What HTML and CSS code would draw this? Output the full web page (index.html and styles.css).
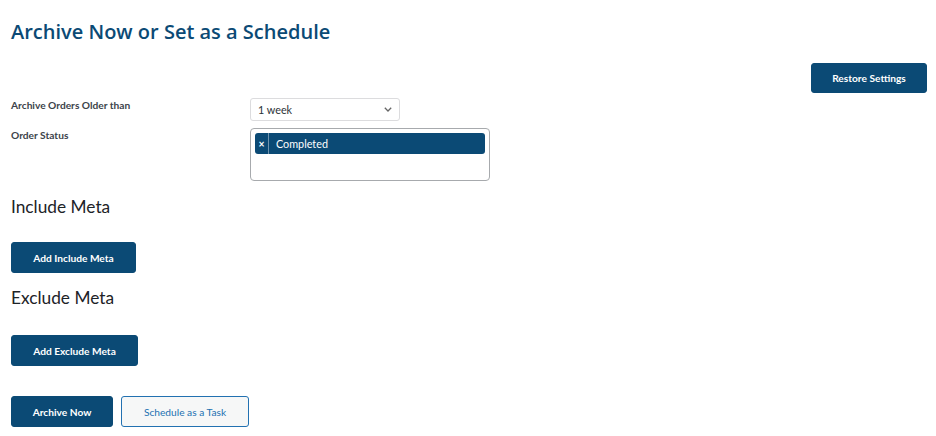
FILE: index.html
```html
<!DOCTYPE html>
<html lang="en">
<head>
<meta charset="utf-8">
<title>Archive Now or Set as a Schedule</title>
<link rel="stylesheet" href="styles.css">
</head>
<body>
<div class="page">
  <h2 class="title">Archive Now or Set as a Schedule</h2>
  <div class="toolbar">
    <button class="btn btn-primary btn-restore" type="button">Restore Settings</button>
  </div>
  <div class="form">
    <div class="row row-age">
      <div class="label">Archive Orders Older than</div>
      <div class="field">
        <div class="select">
          <span>1 week</span>
          <svg class="chev" width="8" height="5" viewBox="0 0 8 5"><path d="M0.8 0.8l3.2 3.2 3.2-3.2" fill="none" stroke="#666" stroke-width="1.3"/></svg>
        </div>
      </div>
    </div>
    <div class="row row-status">
      <div class="label">Order Status</div>
      <div class="field">
        <div class="multi">
          <div class="tag"><span class="tag-x">×</span><span class="tag-text">Completed</span></div>
        </div>
      </div>
    </div>
  </div>
  <h3 class="section">Include Meta</h3>
  <button class="btn btn-primary btn-meta" type="button">Add Include Meta</button>
  <h3 class="section section-ex">Exclude Meta</h3>
  <button class="btn btn-primary btn-meta btn-ex" type="button">Add Exclude Meta</button>
  <div class="actions">
    <button class="btn btn-primary btn-archive" type="button">Archive Now</button>
    <button class="btn btn-secondary btn-schedule" type="button">Schedule as a Task</button>
  </div>
</div>
</body>
</html>
```

FILE: styles.css
```css
* { box-sizing: border-box; }
html, body { margin: 0; padding: 0; background: #fff; }
body {
  font-family: Lato, "Open Sans", "Liberation Sans", sans-serif;
  color: #1d2327;
}
.page {
  padding: 0 9px 0 11px;
  display: flex;
  flex-direction: column;
  align-items: flex-start;
}
.title {
  margin: 18px 0 0;
  font-family: "Open Sans", "Noto Sans", sans-serif;
  font-size: 20px;
  line-height: 28px;
  font-weight: 600;
  color: #0b4a75;
}
.toolbar {
  align-self: stretch;
  display: flex;
  justify-content: flex-end;
  margin-top: 17px;
}
.btn {
  font-family: inherit;
  font-size: 10.2px;
  font-weight: 700;
  border-radius: 3px;
  cursor: pointer;
  padding: 0;
  height: 31px;
}
.btn-primary {
  background: #0b4a75;
  color: #fff;
  border: 1px solid #0b4a75;
}
.btn-secondary {
  background: #f6f7f7;
  color: #2271b1;
  border: 1px solid #2271b1;
  font-weight: 400;
}
.btn-restore { width: 116px; height: 30px; }
.form { margin-top: 5px; align-self: stretch; }
.row { display: flex; align-items: flex-start; }
.label {
  width: 239px;
  font-size: 10.2px;
  font-weight: 700;
  color: #3c434a;
  line-height: 14px;
}
.row-status { margin-top: 7px; }
.select {
  width: 150px;
  height: 23px;
  border: 1px solid #dcdcde;
  border-radius: 3px;
  display: flex;
  align-items: center;
  justify-content: space-between;
  padding: 0 7px 0 7px;
  font-size: 10.8px;
  color: #2c3338;
}
.multi {
  width: 240px;
  height: 53px;
  border: 1px solid #a7aaad;
  border-radius: 4px;
  padding: 4px 4px;
}
.tag {
  display: flex;
  align-items: stretch;
  height: 21px;
  background: #0b4a75;
  border-radius: 3px;
  color: #fff;
  font-size: 10.8px;
}
.tag-x {
  width: 14px;
  display: flex;
  align-items: center;
  justify-content: center;
  font-weight: 700;
  font-size: 10.5px;
  border-right: 1px solid #6f93ae;
}
.tag-text { display: flex; align-items: center; padding-left: 7px; }
.section {
  margin: 14px 0 0;
  font-size: 17.3px;
  font-weight: 400;
  line-height: 24px;
  color: #1d2327;
}
.btn-meta { width: 125px; margin-top: 23px; }
.btn-ex { width: 127px; }
.section-ex { margin-top: 13px; }
.section-ex + .btn-meta { margin-top: 25px; }
.actions { display: flex; gap: 8px; margin-top: 30px; }
.btn-archive { width: 102px; }
.btn-schedule { width: 128px; }
```
